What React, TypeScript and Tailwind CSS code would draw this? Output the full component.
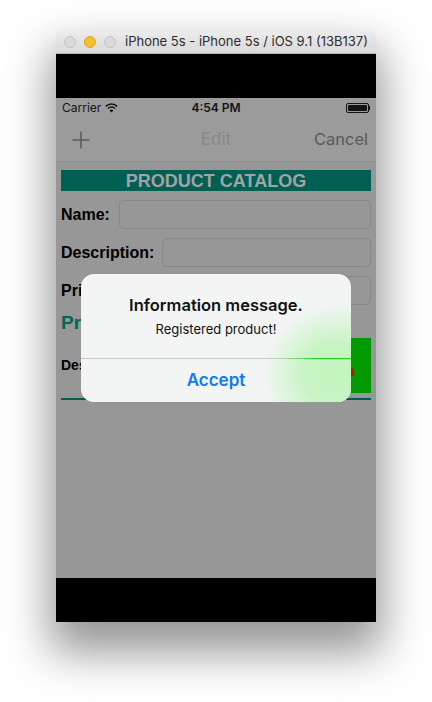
import React from "react";

export default function App() {
  return (
    <div className="w-[432px] h-[702px] bg-white flex justify-center pt-[31px] overflow-hidden">
      <div className="w-[320px] h-[591px] flex flex-col rounded-t-[5px] shadow-[0_24px_45px_6px_rgba(0,0,0,0.42)]">
        {/* Title bar */}
        <div className="h-[23px] rounded-t-[5px] bg-gradient-to-b from-[#ececec] to-[#d9d9d9] border-b border-[#b5b5b5] flex items-center pl-[8px] shrink-0">
          <div className="flex gap-[8px]">
            <div className="w-[12px] h-[12px] rounded-full bg-[#dadada] border border-[#c4c4c4]" />
            <div className="w-[12px] h-[12px] rounded-full bg-[#f6bd2e] border border-[#e0a722]" />
            <div className="w-[12px] h-[12px] rounded-full bg-[#dadada] border border-[#c4c4c4]" />
          </div>
          <span className="ml-[9px] text-[13px] text-[#2e2e2e] whitespace-nowrap" style={{ fontFamily: "Inter, 'Liberation Sans', sans-serif" }}>
            iPhone 5s - iPhone 5s / iOS 9.1 (13B137)
          </span>
        </div>
        <div className="h-[44px] bg-black shrink-0" />
        {/* Screen */}
        <div className="relative h-[480px] bg-[#979797] flex flex-col shrink-0" style={{ fontFamily: "'Liberation Sans', Arial, sans-serif" }}>
          {/* status bar */}
          <div className="h-[20px] bg-[#9b9b9b] flex items-center px-[6px] text-[12px] text-[#141414]" style={{ fontFamily: "Inter, sans-serif" }}>
            <div className="flex-1 flex items-center gap-[4px]">
              <span>Carrier</span>
              <svg width="13" height="10" viewBox="0 0 13 10">
                <path d="M0.8 3.4 A8 8 0 0 1 12.2 3.4" stroke="#141414" strokeWidth="1.5" fill="none" />
                <path d="M2.9 5.5 A5 5 0 0 1 10.1 5.5" stroke="#141414" strokeWidth="1.5" fill="none" />
                <path d="M6.5 9.5 L4.6 7.4 A2.7 2.7 0 0 1 8.4 7.4 Z" fill="#141414" />
              </svg>
            </div>
            <span className="font-semibold">4:54 PM</span>
            <div className="flex-1 flex justify-end items-center">
              <div className="w-[23px] h-[10px] rounded-[2px] border border-[#141414] p-[1px]">
                <div className="w-full h-full bg-[#141414] rounded-[1px]" />
              </div>
              <div className="w-[1.5px] h-[4px] bg-[#141414]" />
            </div>
          </div>
          {/* nav bar */}
          <div className="h-[44px] bg-[#9b9b9b] border-b border-[#8f8f8f] flex items-center px-[16px] text-[17px]" style={{ fontFamily: "Inter, sans-serif" }}>
            <div className="flex-1">
              <svg width="18" height="18" viewBox="0 0 18 18">
                <path d="M9 0.5 V17.5 M0.5 9 H17.5" stroke="#595959" strokeWidth="1.5" />
              </svg>
            </div>
            <span className="text-[#888888]">Edit</span>
            <div className="flex-1 flex justify-end">
              <span className="text-[#5a5a5a] text-[16.5px] -mr-[8px]">Cancel</span>
            </div>
          </div>
          {/* content */}
          <div className="px-[5px] pt-[8px] flex flex-col">
            <div className="h-[21px] bg-[#005f53] flex items-center justify-center text-[18px] font-bold text-[#a3a3a3] leading-none">
              PRODUCT CATALOG
            </div>
            <div className="mt-[9px] flex items-center h-[29px]">
              <span className="text-[16px] font-bold text-black w-[58px]">Name:</span>
              <div className="flex-1 h-[29px] rounded-[5px] border border-[#878787]" />
            </div>
            <div className="mt-[9px] flex items-center h-[29px]">
              <span className="text-[16px] font-bold text-black w-[101px]">Description:</span>
              <div className="flex-1 h-[29px] rounded-[5px] border border-[#878787]" />
            </div>
            <div className="mt-[9px] flex items-center h-[29px]">
              <span className="text-[16px] font-bold text-black w-[58px]">Price:</span>
              <div className="flex-1 h-[29px] rounded-[5px] border border-[#878787]" />
            </div>
            <div className="mt-[6px] text-[19px] font-bold text-[#006657] leading-[24px]">Products</div>
            <div className="mt-[3px] flex items-center h-[55px]">
              <span className="flex-1 text-[14px] font-bold text-black">Description</span>
              <div className="w-[20px] h-[55px] bg-[#009900] flex items-center">
                <div className="w-[3px] h-[9px] mt-[14px] rounded-r-full bg-[#b31a00]" />
              </div>
            </div>
            <div className="mt-[5px] h-[2px] bg-[#005f53]" />
          </div>

          {/* Alert */}
          <div
            className="absolute left-[25px] top-[176px] w-[270px] h-[128px] rounded-[13px] overflow-hidden flex flex-col bg-[#f3f5f5]"
            style={{ fontFamily: "Inter, sans-serif" }}
          >
            <div className="absolute inset-0 bg-[radial-gradient(ellipse_75px_70px_at_95%_78%,#c2f5bd_0%,#c8f4c4_45%,rgba(243,245,245,0)_100%)]" />
            <div className="relative h-[84px] flex flex-col items-center pt-[20px]">
              <span className="text-[16.5px] font-semibold text-[#111] leading-[22px]">Information message.</span>
              <span className="mt-[5px] text-[13px] text-[#111] leading-[16px]">Registered product!</span>
            </div>
            <div className="relative h-[1px] bg-[linear-gradient(to_right,#c6c9cb_0%,#c6c9cb_74%,#22d622_86%,#22d622_100%)]" />
            <div className="relative flex-1 flex items-center justify-center">
              <span className="text-[17px] font-semibold text-[#0a7bff]">Accept</span>
            </div>
          </div>
        </div>
        <div className="h-[44px] bg-black shrink-0" />
      </div>
    </div>
  );
}
